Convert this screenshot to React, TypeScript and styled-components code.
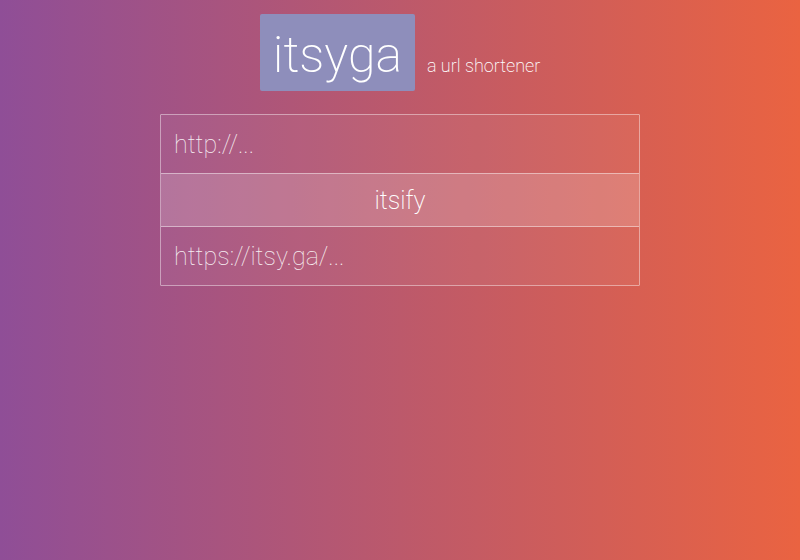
import React, { useState } from "react";
import styled, { createGlobalStyle } from "styled-components";

const GlobalStyle = createGlobalStyle`
  *, *::before, *::after { box-sizing: border-box; }
  html { min-height: 100%; background: linear-gradient(90deg, #8f4e97 0%, #bc596b 50%, #ea6341 100%); }
  body { margin: 0; font-family: Roboto, "Liberation Sans", sans-serif; font-weight: 100; color: #fff; }
`;

const Page = styled.div`
  display: flex;
  flex-direction: column;
  align-items: center;
  gap: 23px;
  padding-top: 14px;
`;

const Header = styled.header`
  display: flex;
  align-items: baseline;
  gap: 12px;
`;

const Logo = styled.h1`
  margin: 0;
  padding: 5px 13px 0;
  border-radius: 2px;
  background: #8e8ebb;
  font-size: 50px;
  line-height: 72px;
  font-weight: 200;
`;

const Tagline = styled.p`
  margin: 0;
  font-size: 18px;
  font-weight: 200;
`;

const Form = styled.form`
  display: flex;
  flex-direction: column;
  width: 60%;
  border: 1px solid rgba(255, 255, 255, 0.45);
  border-radius: 1px;
`;

const Field = styled.input`
  width: 100%;
  height: 58px;
  padding: 0 13px;
  border: 0;
  border-radius: 0;
  background: rgba(255, 255, 255, 0.05);
  color: #fff;
  font: inherit;
  font-size: 25px;
  outline: none;
  &::placeholder { color: #fff; opacity: 0.9; }
`;

const Submit = styled.button`
  height: 54px;
  padding: 0;
  border: solid rgba(255, 255, 255, 0.45);
  border-width: 1px 0;
  background: rgba(255, 255, 255, 0.2);
  color: #fff;
  font: inherit;
  font-size: 25px;
  font-weight: 200;
  cursor: pointer;
`;

export default function App() {
  const [url, setUrl] = useState("");
  return (
    <>
      <GlobalStyle />
      <Page>
        <Header>
          <Logo>itsyga</Logo>
          <Tagline>a url shortener</Tagline>
        </Header>
        <Form onSubmit={(event) => event.preventDefault()}>
          <Field aria-label="URL to shorten" placeholder="http://..." value={url} onChange={(event) => setUrl(event.target.value)} />
          <Submit type="submit">itsify</Submit>
          <Field aria-label="Short URL" placeholder="https://itsy.ga/..." readOnly />
        </Form>
      </Page>
    </>
  );
}
